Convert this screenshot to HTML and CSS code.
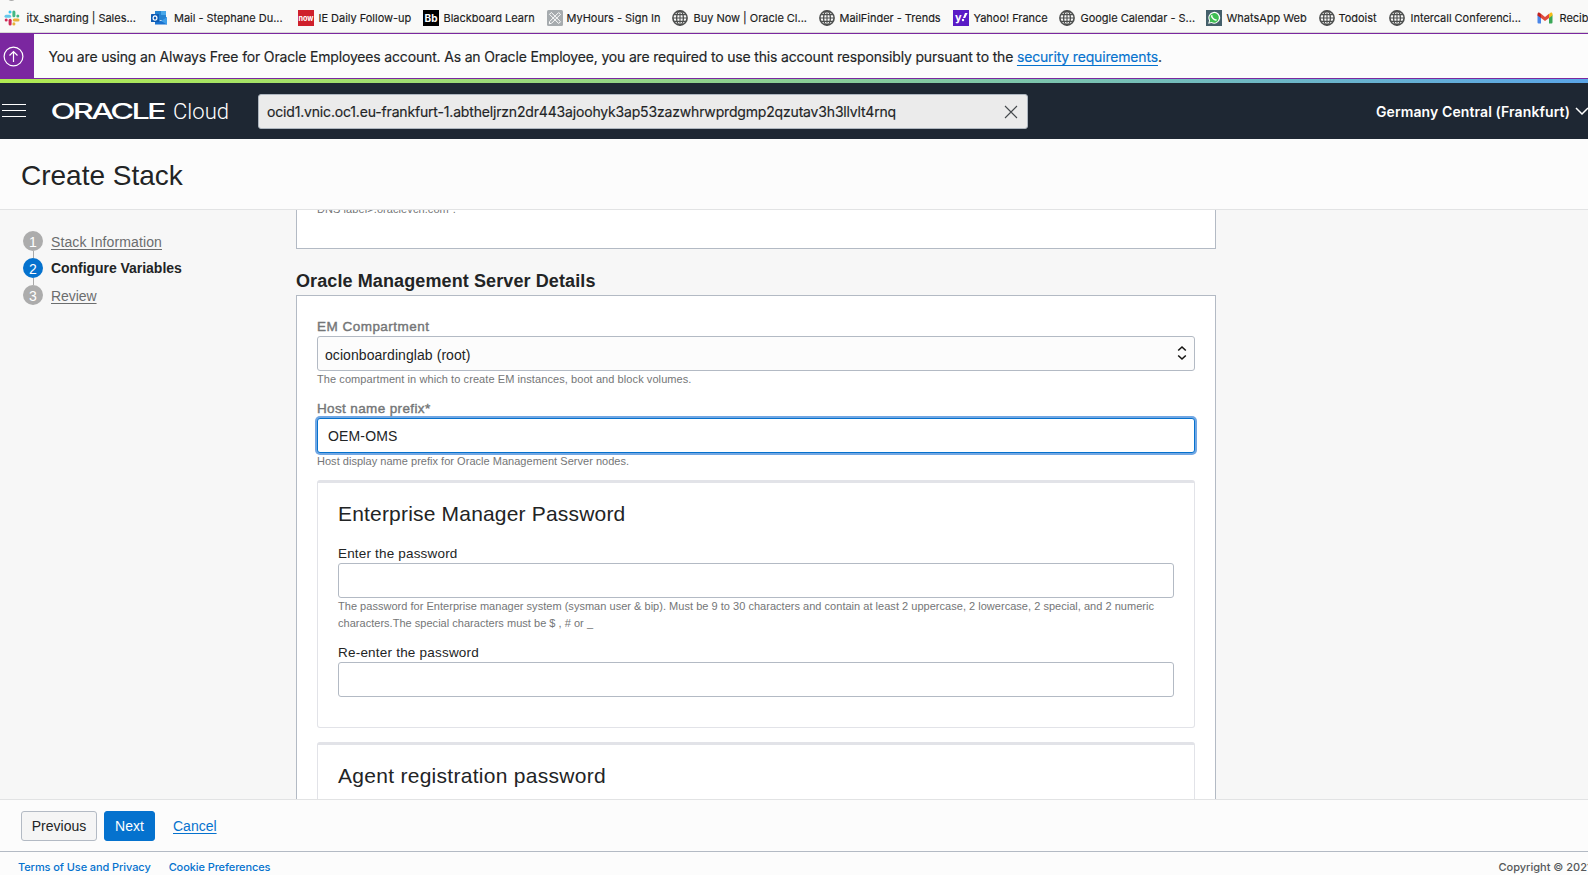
FILE: index.html
```
<!DOCTYPE html>
<html lang="en">
<head>
<meta charset="utf-8">
<title>Create Stack</title>
<link rel="stylesheet" href="styles.css">
</head>
<body>
<svg class="defs" aria-hidden="true">
  <symbol id="globe" viewBox="0 0 16 16">
    <g fill="none" stroke="#4d4f4e" stroke-width="1.3">
      <circle cx="8" cy="8" r="7.1" stroke-width="1.6"/>
      <ellipse cx="8" cy="8" rx="3.4" ry="7"/>
      <path d="M8 1v14M1 8h14M2.2 4.6h11.6M2.2 11.4h11.6" stroke-width="1.1"/>
    </g>
  </symbol>
</svg>

<nav class="bookmarks">
  <span class="tab-edge"></span>
  <a class="bm g6">
    <svg class="ic" viewBox="0 0 16 16">
      <g stroke-width="3" stroke-linecap="round">
        <path d="M6 2v.1" stroke="#36c5f0"/><path d="M2 6.2h3.6" stroke="#64c8ea"/>
        <path d="M9.9 2v3.8" stroke="#43b883"/><path d="M13.8 6v.1" stroke="#43b883"/>
        <path d="M10.3 9.9h3.7" stroke="#e8b23a"/><path d="M9.9 13.8v.1" stroke="#e8b23a"/>
        <path d="M6.1 10.3v3.7" stroke="#cf2a58"/><path d="M2.2 9.9v.1" stroke="#cf2a58"/>
      </g>
    </svg><span>itx_sharding | Sales...</span></a>
  <a class="bm g7">
    <svg class="ic" viewBox="0 0 16 16">
      <rect x="4" y="1" width="11" height="9" fill="#2583d0"/>
      <path d="M10 1h5v4h-5z" fill="#48a8ea"/>
      <path d="M4 8l6 3 6-4v7.500H4z" fill="#1a72cf"/>
      <path d="M10 11l6-4v7.500z" fill="#3f9fe9"/>
      <rect y="4" width="8" height="8" rx=".6" fill="#0f5cb3"/>
      <ellipse cx="4" cy="8" rx="1.900" ry="2.200" fill="none" stroke="#fff" stroke-width="1.200"/>
    </svg><span>Mail - Stephane Du...</span></a>
  <a class="bm g4">
    <svg class="ic" viewBox="0 0 16 16"><rect width="16" height="16" fill="#cf202b"/><text class="ic-text" x=".5" y="10.500" font-size="7.500" textLength="15" lengthAdjust="spacingAndGlyphs">now</text></svg><span>IE Daily Follow-up</span></a>
  <a class="bm g4">
    <svg class="ic" viewBox="0 0 16 16"><rect width="16" height="16" fill="#000"/><text class="ic-text" x="1.500" y="11.800" font-size="10.500" textLength="13" lengthAdjust="spacingAndGlyphs">Bb</text></svg><span>Blackboard Learn</span></a>
  <a class="bm g3">
    <svg class="ic" viewBox="0 0 16 16">
      <rect width="16" height="16" rx="1.500" fill="#a6abae"/>
      <g fill="none" stroke="#fff" stroke-width="1"><path d="M2.500 4.300l1.800-1.800 9.200 9.200-1.800 1.800zM11.700 2.500l1.800 1.800-9 9-2.200.5.400-2.300z" fill="#a6abae"/></g>
    </svg><span>MyHours - Sign In</span></a>
  <a class="bm g5"><svg class="ic"><use href="#globe"/></svg><span>Buy Now | Oracle Cl...</span></a>
  <a class="bm g4"><svg class="ic"><use href="#globe"/></svg><span>MailFinder - Trends</span></a>
  <a class="bm g4">
    <svg class="ic" viewBox="0 0 16 16"><rect width="16" height="16" fill="#5a1bc6"/><text class="ic-text" x="2" y="11" font-size="11">y</text><path d="M12 3h2.600l-2.400 5h-2.200z" fill="#fff"/><circle cx="10" cy="10" r="1.200" fill="#fff"/></svg><span>Yahoo! France</span></a>
  <a class="bm g5"><svg class="ic"><use href="#globe"/></svg><span>Google Calendar - S...</span></a>
  <a class="bm g4">
    <svg class="ic" viewBox="0 0 16 16">
      <rect width="16" height="16" fill="#45606b"/>
      <path d="M2.200 13.800l.9-3.200a5.900 5.900 0 1 1 2.300 2.300z" fill="#fff"/>
      <path d="M3.500 12.500l.6-2a4.800 4.800 0 1 1 1.600 1.500z" fill="#3fbd52"/>
      <path d="M6.200 5.200c-.8.800-.5 2 .9 3.400s2.800 1.700 3.400.9" fill="none" stroke="#fff" stroke-width="1.400"/>
    </svg><span>WhatsApp Web</span></a>
  <a class="bm g3"><svg class="ic"><use href="#globe"/></svg><span>Todoist</span></a>
  <a class="bm g5"><svg class="ic"><use href="#globe"/></svg><span>Intercall Conferenci...</span></a>
  <a class="bm g6">
    <svg class="ic" viewBox="0 0 16 16">
      <path d="M.5 4.500L4 7v6.500H1.500a1 1 0 0 1-1-1z" fill="#4a86e8"/>
      <path d="M15.500 4.500L12 7v6.500h2.500a1 1 0 0 0 1-1z" fill="#3aa757"/>
      <path d="M12 4l1.500-1.200c1-.7 2 0 2 1.200v1.400L12 8z" fill="#f5bb17"/>
      <path d="M4 3.800l4 3.100 4-3.100V8l-4 3.100L4 8z" fill="#df4a3c"/>
      <path d="M4 8V3.800L2.500 2.700c-1-.7-2 .1-2 1.300v1.400z" fill="#c5221f"/>
    </svg><span>Recib</span></a>
</nav>

<div class="banner">
  <div class="banner-icon">
    <svg width="21" height="21" viewBox="0 0 21 21" fill="none" stroke="#fff" stroke-width="1.200"><circle cx="10.500" cy="10.500" r="9.400"/><path d="M10.500 16V5.500M6.500 9.500l4-4 4 4"/></svg>
  </div>
  <p>You are using an Always Free for Oracle Employees account. As an Oracle Employee, you are required to use this account responsibly pursuant to the <a class="link">security requirements</a>.</p>
</div>
<div class="stripe"></div>

<header class="topbar">
  <svg class="menu" width="24" height="16" viewBox="0 0 24 16"><path d="M0 1.500h24M0 7.500h24M0 13.500h24" stroke="#fff" stroke-width="1.100"/></svg>
  <svg class="logo" width="180" height="24" viewBox="0 0 180 24">
    <text class="logo-oracle" transform="translate(-1.500 20) scale(1.550 1)" x="0" y="0" textLength="75">ORACLE</text>
    <text class="logo-cloud" x="121" y="20" textLength="56" lengthAdjust="spacingAndGlyphs">Cloud</text>
  </svg>
  <div class="search">
    <span>ocid1.vnic.oc1.eu-frankfurt-1.abtheljrzn2dr443ajoohyk3ap53zazwhrwprdgmp2qzutav3h3llvlt4rnq</span>
    <svg width="14" height="14" viewBox="0 0 14 14"><path d="M1 1l12 12M13 1L1 13" stroke="#45494d" stroke-width="1.100"/></svg>
  </div>
  <div class="region"><span>Germany Central (Frankfurt)</span><svg width="14" height="9" viewBox="0 0 14 9"><path d="M1 1l6 6 6-6" fill="none" stroke="#fff" stroke-width="1.500"/></svg></div>
</header>

<div class="title-bar"><h1>Create Stack</h1></div>

<main class="body">
  <ol class="steps">
    <li><b class="num">1</b><a>Stack Information</a></li>
    <li class="current"><b class="num">2</b><strong>Configure Variables</strong></li>
    <li><b class="num">3</b><a class="review">Review</a></li>
  </ol>
  <div class="form">
    <section class="panel first"><p class="help dns">DNS label&gt;.oraclevcn.com".</p></section>
    <h2>Oracle Management Server Details</h2>
    <section class="panel main-panel">
      <div class="field">
        <label class="medium em">EM Compartment</label>
        <div class="select"><span>ocionboardinglab (root)</span>
          <svg width="10" height="16" viewBox="0 0 10 16" fill="none" stroke="#161513" stroke-width="1.600"><path d="M1.200 5.500L5 2l3.800 3.500M1.200 10.500L5 14l3.800-3.500"/></svg>
        </div>
        <p class="help wide">The compartment in which to create EM instances, boot and block volumes.</p>
      </div>
      <div class="field">
        <label class="medium">Host name prefix*</label>
        <div class="input focused">OEM-OMS</div>
        <p class="help">Host display name prefix for Oracle Management Server nodes.</p>
      </div>
      <section class="card">
        <h3>Enterprise Manager Password</h3>
        <div class="field">
          <label>Enter the password</label>
          <div class="input"></div>
          <p class="help">The password for Enterprise manager system (sysman user &amp; bip). Must be 9 to 30 characters and contain at least 2 uppercase, 2 lowercase, 2 special, and 2 numeric<br>characters.The special characters must be $ , # or _</p>
        </div>
        <div class="field">
          <label class="re">Re-enter the password</label>
          <div class="input"></div>
        </div>
      </section>
      <section class="card">
        <h3 class="agent">Agent registration password</h3>
      </section>
    </section>
  </div>
</main>

<div class="actions">
  <button class="btn">Previous</button>
  <button class="btn primary">Next</button>
  <a class="link cancel">Cancel</a>
</div>
<footer class="footer">
  <a>Terms of Use and Privacy</a>
  <a>Cookie Preferences</a>
  <span class="copyright">Copyright © 2021</span>
</footer>
</body>
</html>
```
FILE: styles.css
```
* { box-sizing: border-box; }
html, body { margin: 0; height: 100%; overflow: hidden; }
body {
  display: flex;
  flex-direction: column;
  width: 1588px;
  height: 875px;
  background: #fcfcfc;
  color: #222425;
  font: 14px/20px "Liberation Sans", Arial, sans-serif;
}
h1, h2, h3, p, ol { margin: 0; padding: 0; font-weight: 400; }
svg { display: block; flex: none; }
.defs { position: absolute; width: 0; height: 0; }
.link { color: #0572ce; text-decoration: underline; }

/* Bookmarks */
.bookmarks {
  position: relative;
  flex: none;
  display: grid;
  grid-template-columns: 147px 147px 125px 124px 125px 147px 134px 106px 147px 113px 70px 148px 60px;
  height: 33px;
  padding: 10px 0 0 4px;
  overflow: hidden;
  background: #f9f9f8;
  border-bottom: 1px solid #d8d8d6;
  font: 11px/16px Inter, sans-serif;
  letter-spacing: -.02px;
  color: #1c1c1c;
}
.tab-edge {
  position: absolute;
  left: 7px;
  top: -8px;
  width: 9px;
  height: 9px;
  border-radius: 50%;
  background: #a9a9a9;
}
.bm { display: flex; white-space: nowrap; }
.bm span { -webkit-text-stroke: .15px; }
.ic { width: 16px; height: 16px; }
.g3 { gap: 3.5px; }
.g4 { gap: 4.5px; }
.g5 { gap: 5.5px; }
.g6 { gap: 6.5px; }
.g7 { gap: 7px; }
.ic-text { font-family: Inter, sans-serif; font-weight: 700; fill: #fff; letter-spacing: 0; }

/* Account banner */
.banner {
  flex: none;
  display: flex;
  height: 46px;
  border: solid #7b27a0;
  border-width: 1px 0;
  font: 14px/20px Inter, sans-serif;
  letter-spacing: -.167px;
}
.banner-icon {
  display: flex;
  align-items: center;
  width: 34px;
  padding-left: 3px;
  background: #7b27a0;
}
.banner p { padding: 13px 0 0 14.5px; white-space: nowrap; -webkit-text-stroke: .15px; }
.banner .link { text-underline-offset: 3px; text-decoration-thickness: 1px; }
.stripe { flex: none; height: 4px; background: linear-gradient(90deg, #b0ea52, #9cdb78 30%, #7cc4ac 65%, #5aa5e8); }

/* Header */
.topbar {
  flex: none;
  display: flex;
  align-items: center;
  height: 56px;
  padding-left: 2px;
  overflow: hidden;
  background: #1e2733;
  color: #fff;
  font: 14px/20px Inter, sans-serif;
}
.logo { margin: 0 26px 0 26px; overflow: visible; }
.logo-oracle { font: 500 21px Inter, sans-serif; fill: #fff; }
.logo-cloud { font: 300 22px Roboto, sans-serif; fill: #fff; }
.search {
  flex: none;
  display: flex;
  align-items: center;
  justify-content: space-between;
  width: 770px;
  height: 35px;
  margin-top: 1px;
  padding: 0 9px 0 8px;
  border: 1px solid #aeb6bf;
  border-radius: 3px;
  background: #ebebeb;
  color: #222425;
  letter-spacing: -.172px;
  -webkit-text-stroke: .15px;
}
.region {
  flex: none;
  display: flex;
  align-items: center;
  gap: 5px;
  margin: 1px 0 0 348px;
  white-space: nowrap;
  font-weight: 600;
  letter-spacing: .1px;
}

/* Page title */
.title-bar {
  flex: none;
  height: 71px;
  padding: 21px 0 0 21px;
  background: #fcfcfc;
  border-bottom: 1px solid #e2e3e4;
}
h1 { font-size: 28px; line-height: 32px; }

/* Body */
.body {
  flex: none;
  display: flex;
  height: 589px;
  overflow: hidden;
  background: #f7f7f7;
}
.steps { width: 296px; padding: 21px 0 0 23px; list-style: none; }
.steps li { display: flex; position: relative; height: 27px; gap: 8px; }
.steps li + li::before {
  content: "";
  position: absolute;
  left: 10px;
  top: -7px;
  width: 1px;
  height: 7px;
  background: #a9a9a9;
}
.num {
  width: 20px;
  height: 20px;
  padding-top: 1px;
  border-radius: 50%;
  background: #acacac;
  color: #fff;
  font-weight: 400;
  text-align: center;
}
.current .num { background: #0572ce; }
.steps strong { letter-spacing: -.04px; }
.steps a { padding-top: 1px; color: #6b6d6e; text-decoration: underline; text-underline-offset: 2px; letter-spacing: .12px; }
.steps .review { letter-spacing: -.06px; }
.form { width: 920px; }
.panel { padding: 0 20px; border: 1px solid #b3bac4; background: #fff; }
.first { height: 48px; margin-top: -9px; border-top: 0; }
.main-panel { height: 620px; padding-top: 21px; }
h2 { margin: 20px 0 2px; font-size: 18px; font-weight: 700; line-height: 24px; letter-spacing: .105px; }
.field + .field { margin-top: 11px; }
label { display: block; font-size: 13.5px; line-height: 19px; letter-spacing: .177px; }
.re { letter-spacing: .211px; }
.medium { color: #747677; letter-spacing: .365px; -webkit-text-stroke: .4px #747677; }
.em { letter-spacing: .48px; }
.help { color: #747677; font-size: 11px; line-height: 17px; letter-spacing: .025px; white-space: nowrap; }
.wide { letter-spacing: .081px; }
.dns { letter-spacing: .08px; }
.select, .input { height: 35px; border: 1px solid #b3bac4; border-radius: 3px; background: #fff; }
.select {
  display: flex;
  justify-content: space-between;
  padding: 8px 7px 0 7px;
  background: #fcfcfc;
  letter-spacing: .066px;
}
.input { padding: 7px 10px; letter-spacing: .15px; }
.focused { border-color: #0572ce; box-shadow: 0 0 0 2px #72a7e3; }
.card {
  margin-top: 10px;
  padding: 18px 20px 30px;
  border: 1px solid #e2e3e8;
  border-top-width: 3px;
  border-radius: 3px;
}
.card + .card { margin-top: 14px; }
h3 { margin-bottom: 17px; font-size: 21px; line-height: 26px; letter-spacing: .186px; }
.agent { letter-spacing: .28px; }

/* Actions */
.actions {
  flex: none;
  display: flex;
  height: 53px;
  padding: 11px 0 0 21px;
  border-top: 1px solid #e2e3e4;
  border-bottom: 1px solid #b3bac4;
}
.btn {
  width: 76px;
  height: 30px;
  margin: 0 7px 0 0;
  padding: 0 0 1px;
  border: 1px solid #b3bac4;
  border-radius: 3px;
  background: #f5f5f5;
  color: #222425;
  font: inherit;
}
.primary { width: 51px; margin-right: 18px; border-color: #0572ce; background: #0572ce; color: #fff; }
.cancel { padding-top: 5px; text-underline-offset: 2px; }

/* Footer */
.footer {
  flex: none;
  display: flex;
  gap: 18px;
  height: 23px;
  padding: 7px 0 0 18px;
  overflow: hidden;
  color: #0572ce;
  font: 500 11px/16px Inter, sans-serif;
  letter-spacing: -.09px;
  white-space: nowrap;
}
.copyright { margin-left: 1210px; color: #55585a; letter-spacing: 0; }
```
